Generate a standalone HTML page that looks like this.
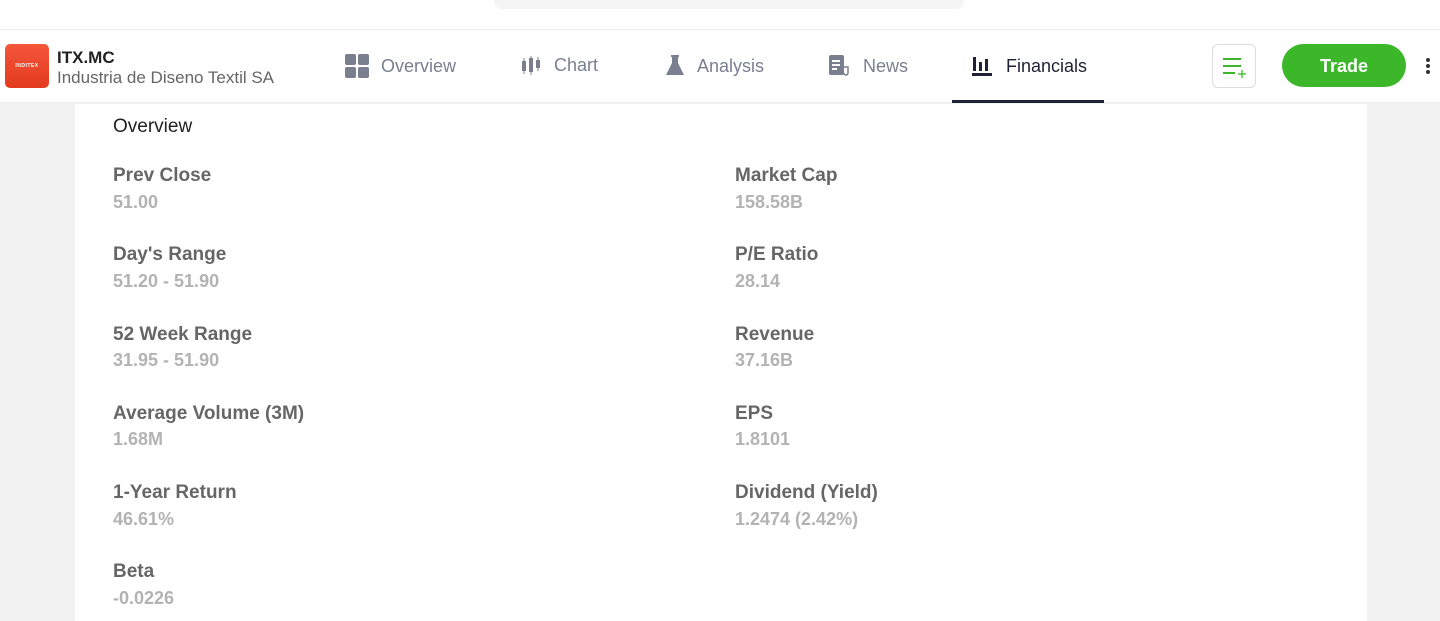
<!DOCTYPE html>
<html><head><meta charset="utf-8"><style>
*{margin:0;padding:0;box-sizing:border-box}
body{width:1440px;height:621px;overflow:hidden;background:#f2f2f2;font-family:"Liberation Sans","DejaVu Sans",sans-serif;position:relative}
.top{position:absolute;left:0;top:0;width:1440px;height:30px;background:#fff;border-bottom:1px solid #ececec}
.search{position:absolute;left:494px;top:-10px;width:470px;height:19px;background:#f5f5f5;border-radius:8px}
.hdr{position:absolute;left:0;top:30px;width:1440px;height:73px;background:#fff;border-bottom:1px solid #ececec}
.logo{position:absolute;left:5px;top:14px;width:44px;height:44px;border-radius:5px;background:linear-gradient(#f4573a,#e23a1f);color:#fff;font-size:5px;font-weight:bold;text-align:center;line-height:44px;letter-spacing:.5px}
.tk{position:absolute;left:57px;top:18px;font-size:17px;font-weight:bold;color:#222}
.nm{position:absolute;left:57px;top:38px;font-size:17px;color:#666}
.tab{position:absolute;top:25px;font-size:18px;color:#7a7f90;display:flex;align-items:center;gap:12px}
.tab.act{color:#1f2235}
.ul{position:absolute;left:952px;top:70px;width:152px;height:3px;background:#1f2235}
.wl{position:absolute;left:1212px;top:14px;width:44px;height:44px;border:1px solid #ddd;border-radius:6px}
.trade{position:absolute;left:1282px;top:14px;width:124px;height:43px;background:#3cb72a;border-radius:22px;color:#fff;font-weight:bold;font-size:18px;text-align:center;line-height:45px}
.dots{position:absolute;left:1426px;top:28px;width:4px}
.dots i{display:block;width:4px;height:4px;background:#333;border-radius:50%;margin-bottom:2px}
.panel{position:absolute;left:75px;top:104px;width:1292px;height:517px;background:#fff}
.ov{position:absolute;left:113px;top:116px;font-size:19px;color:#222}
.l{position:absolute;font-size:19px;font-weight:bold;color:#666;margin-top:2px}
.v{position:absolute;font-size:18px;font-weight:bold;color:#b3b3b3;margin-top:1px}
</style></head><body>
<div class="top"><div class="search"></div></div>
<div class="hdr">
<div class="logo">INDITEX</div>
<div class="tk">ITX.MC</div>
<div class="nm">Industria de Diseno Textil SA</div>
<div class="tab" style="left:345px;top:24px"><svg width="24" height="24"><rect x="0" y="0" width="11" height="11" rx="2" fill="#7a7f90"/><rect x="13" y="0" width="11" height="11" rx="2" fill="#7a7f90"/><rect x="0" y="13" width="11" height="11" rx="2" fill="#7a7f90"/><rect x="13" y="13" width="11" height="11" rx="2" fill="#7a7f90"/></svg>Overview</div>
<div class="tab" style="left:520px"><svg width="22" height="20" fill="#7a7f90"><rect x="2" y="5" width="4" height="10"/><rect x="3.5" y="2" width="1" height="16"/><rect x="9" y="2" width="4" height="14"/><rect x="10.5" y="0" width="1" height="19"/><rect x="16" y="4" width="4" height="8"/><rect x="17.5" y="1" width="1" height="14"/></svg>Chart</div>
<div class="tab" style="left:665px"><svg width="20" height="22" fill="#7a7f90"><rect x="6" y="0" width="8" height="2"/><path d="M7 2h6v6l6 12H1l6-12z"/></svg>Analysis</div>
<div class="tab" style="left:829px"><svg width="22" height="22" fill="#7a7f90"><rect x="0" y="0" width="15" height="20" rx="2"/><rect x="3" y="5" width="8" height="2" fill="#fff"/><rect x="3" y="9" width="8" height="2" fill="#fff"/><rect x="3" y="13" width="5" height="2" fill="#fff"/><path d="M15 12h4v6a2 2 0 0 1-4 0" fill="none" stroke="#7a7f90" stroke-width="1.5"/></svg>News</div>
<div class="tab act" style="left:972px"><svg width="22" height="22" fill="#1f2235"><rect x="1" y="2" width="3" height="14"/><rect x="7" y="7" width="3" height="9"/><rect x="13" y="4" width="3" height="12"/><rect x="0" y="18" width="20" height="3"/></svg>Financials</div>
<div class="ul"></div>
<div class="wl"><svg width="44" height="44"><g stroke="#3cb72a" stroke-width="2"><line x1="10" y1="14" x2="28" y2="14"/><line x1="10" y1="21" x2="28" y2="21"/><line x1="10" y1="28" x2="22" y2="28"/><line x1="25" y1="29" x2="33" y2="29" stroke-width="1.3"/><line x1="29" y1="25" x2="29" y2="33" stroke-width="1.3"/></g></svg></div>
<div class="trade">Trade</div>
<div class="dots"><i></i><i></i><i></i></div>
</div>
<div class="panel"></div>
<div class="ov">Overview</div>
<div class="l" style="left:113px;top:163px">Prev Close</div><div class="v" style="left:113px;top:191px">51.00</div>
<div class="l" style="left:113px;top:242px">Day's Range</div><div class="v" style="left:113px;top:270px">51.20 - 51.90</div>
<div class="l" style="left:113px;top:322px">52 Week Range</div><div class="v" style="left:113px;top:349px">31.95 - 51.90</div>
<div class="l" style="left:113px;top:401px">Average Volume (3M)</div><div class="v" style="left:113px;top:428px">1.68M</div>
<div class="l" style="left:113px;top:480px">1-Year Return</div><div class="v" style="left:113px;top:508px">46.61%</div>
<div class="l" style="left:113px;top:559px">Beta</div><div class="v" style="left:113px;top:587px">-0.0226</div>
<div class="l" style="left:735px;top:163px">Market Cap</div><div class="v" style="left:735px;top:191px">158.58B</div>
<div class="l" style="left:735px;top:242px">P/E Ratio</div><div class="v" style="left:735px;top:270px">28.14</div>
<div class="l" style="left:735px;top:322px">Revenue</div><div class="v" style="left:735px;top:349px">37.16B</div>
<div class="l" style="left:735px;top:401px">EPS</div><div class="v" style="left:735px;top:428px">1.8101</div>
<div class="l" style="left:735px;top:480px">Dividend (Yield)</div><div class="v" style="left:735px;top:508px">1.2474 (2.42%)</div>
</body></html>
